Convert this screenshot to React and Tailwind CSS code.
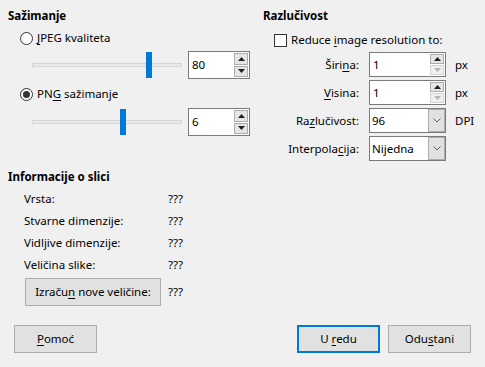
const font = { fontFamily: '"Noto Sans", "Open Sans", sans-serif' };

function Radio({ checked }) {
  return (
    <span className="flex h-[13px] w-[13px] items-center justify-center rounded-full border border-[#333333] bg-white">
      {checked && <span className="h-[7px] w-[7px] rounded-full bg-[#333333]" />}
    </span>
  );
}

function Arrow({ up, disabled }) {
  return (
    <svg width="7" height="4" viewBox="0 0 7 4">
      <path
        d={up ? "M0 4 L3.5 0 L7 4 Z" : "M0 0 L3.5 4 L7 0 Z"}
        fill={disabled ? "#b5b5b5" : "#202020"}
      />
    </svg>
  );
}

function SpinBox({ value, w, h, downDisabled }) {
  return (
    <div className={`flex border border-[#7a7a7a] bg-white ${w} ${h}`}>
      <span className="flex flex-1 items-center pl-[3px]">{value}</span>
      <div className="flex flex-col gap-[1px] py-[1px] pr-[1px]">
        <div className="flex flex-1 w-[14px] items-center justify-center border border-[#adadad] bg-[#e5e5e5]">
          <Arrow up />
        </div>
        <div
          className={`flex flex-1 w-[14px] items-center justify-center border ${
            downDisabled ? "border-[#d4d4d4] bg-[#efefef]" : "border-[#adadad] bg-[#e5e5e5]"
          }`}
        >
          <Arrow disabled={downDisabled} />
        </div>
      </div>
    </div>
  );
}

function Combo({ value }) {
  return (
    <div className="flex h-[25px] w-[77px] border border-[#7a7a7a] bg-white">
      <span className="flex flex-1 items-center pl-[2px]">{value}</span>
      <div className="flex w-[17px] items-center justify-center border border-[#adadad] bg-[#e1e1e1]">
        <svg width="8" height="5" viewBox="0 0 8 5">
          <path d="M0.5 0.5 L4 4 L7.5 0.5" fill="none" stroke="#606060" strokeWidth="1" />
        </svg>
      </div>
    </div>
  );
}

function Slider({ pos }) {
  return (
    <div className="relative h-[28px] w-[150px]">
      <div className="absolute left-0 right-0 top-[12px] h-[4px] border border-[#d6d6d6] bg-[#e7eaea]" />
      <div
        className="absolute top-[1px] h-[26px] w-[6px] bg-[#0078d7]"
        style={{ left: pos }}
      />
    </div>
  );
}

function Button({ children, w, primary }) {
  return (
    <button
      type="button"
      className={`flex h-[28px] items-center justify-center bg-[#e1e1e1] ${w} ${
        primary ? "border-2 border-[#0078d7]" : "border border-[#adadad]"
      }`}
    >
      {children}
    </button>
  );
}

function FieldRow({ label, children, unit }) {
  return (
    <div className="flex h-[25px] items-center">
      <span className="w-[106px] pr-[10px] text-right">{label}</span>
      {children}
      {unit && <span className="ml-[9px]">{unit}</span>}
    </div>
  );
}

const info = ["Vrsta:", "Stvarne dimenzije:", "Vidljive dimenzije:", "Veličina slike:"];

export default function App() {
  return (
    <div
      className="flex h-[367px] w-[485px] flex-col bg-[#f0f0f0] text-[11.5px] leading-[16px] text-black"
      style={font}
    >
      <div className="flex pt-[8px]">
        {/* Sažimanje */}
        <div className="flex w-[255px] flex-col pl-[8px]">
          <div className="h-[16px] font-bold">Sažimanje</div>
          <div className="mt-[6px] flex h-[16px] items-center gap-[4px] pl-[12px]">
            <Radio />
            <span>
              <u className="underline-offset-2">J</u>PEG kvaliteta
            </span>
          </div>
          <div className="mt-[5px] flex items-center gap-[6px] pl-[24px]">
            <Slider pos={114} />
            <SpinBox value="80" w="w-[62px]" h="h-[28px]" />
          </div>
          <div className="mt-[7px] flex h-[16px] items-center gap-[4px] pl-[12px]">
            <Radio checked />
            <span>
              PN<u className="underline-offset-2">G</u> sažimanje
            </span>
          </div>
          <div className="mt-[6px] flex items-center gap-[6px] pl-[24px]">
            <Slider pos={88} />
            <SpinBox value="6" w="w-[62px]" h="h-[28px]" />
          </div>
        </div>

        {/* Razlučivost */}
        <div className="flex flex-1 flex-col pl-[8px]">
          <div className="h-[16px] font-bold">Razlučivost</div>
          <div className="mt-[8px] flex h-[16px] items-center gap-[4px] pl-[11px]">
            <span className="h-[13px] w-[13px] border border-[#333333] bg-white" />
            <span>
              Reduce <u className="underline-offset-2">i</u>mage resolution to:
            </span>
          </div>
          <div className="mt-[4px] flex flex-col gap-[3px]">
            <FieldRow
              label={
                <>
                  Širi<u className="underline-offset-2">n</u>a:
                </>
              }
              unit="px"
            >
              <SpinBox value="1" w="w-[77px]" h="h-[25px]" downDisabled />
            </FieldRow>
            <FieldRow
              label={
                <>
                  <u className="underline-offset-2">V</u>isina:
                </>
              }
              unit="px"
            >
              <SpinBox value="1" w="w-[77px]" h="h-[25px]" downDisabled />
            </FieldRow>
            <FieldRow
              label={
                <>
                  Ra<u className="underline-offset-2">z</u>lučivost:
                </>
              }
              unit="DPI"
            >
              <Combo value="96" />
            </FieldRow>
            <FieldRow
              label={
                <>
                  Interpola<u className="underline-offset-2">c</u>ija:
                </>
              }
            >
              <Combo value="Nijedna" />
            </FieldRow>
          </div>
        </div>
      </div>

      {/* Informacije o slici */}
      <div className="mt-[8px] flex flex-col pl-[8px]">
        <div className="h-[16px] font-bold">Informacije o slici</div>
        <div className="mt-[3px] flex flex-col">
          {info.map((l) => (
            <div key={l} className="flex h-[22px] items-center">
              <span className="w-[160px] pl-[16px]">{l}</span>
              <span>???</span>
            </div>
          ))}
        </div>
        <div className="mt-[2px] flex items-center">
          <div className="w-[160px] pl-[17px]">
            <Button w="w-[136px]">
              <span>
                Izraču<u className="underline-offset-2">n</u> nove veličine:
              </span>
            </Button>
          </div>
          <span>???</span>
        </div>
      </div>

      <div className="mt-auto mb-[14px] flex items-center px-[14px]">
        <Button w="w-[83px]">
          <span>
            <u className="underline-offset-2">P</u>omoć
          </span>
        </Button>
        <div className="ml-auto flex gap-[8px]">
          <Button w="w-[83px]" primary>
            <span>
              U <u className="underline-offset-2">r</u>edu
            </span>
          </Button>
          <Button w="w-[83px]">
            <span>
              Odu<u className="underline-offset-2">s</u>tani
            </span>
          </Button>
        </div>
      </div>
    </div>
  );
}
